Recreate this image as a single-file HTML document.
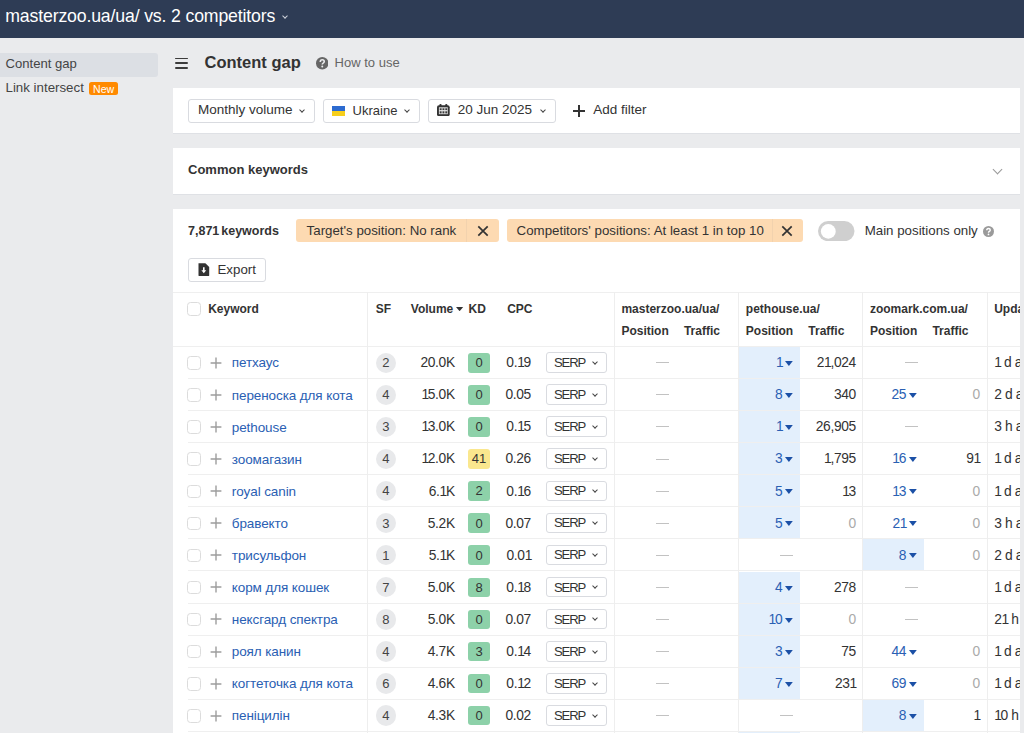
<!DOCTYPE html>
<html><head><meta charset="utf-8">
<style>
*{box-sizing:border-box;margin:0;padding:0}
html,body{width:1024px;height:733px;overflow:hidden;position:relative;background:#eaebed;font-family:"Liberation Sans",sans-serif;color:#333}
.t{position:absolute;white-space:nowrap}
.b{position:absolute}
.chev{position:absolute;width:4px;height:4px;border-right:1.4px solid #444;border-bottom:1.4px solid #444;transform:rotate(45deg)}
.tri{position:absolute;width:8px;height:5px}
</style></head><body>

<div class="b" style="left:0px;top:0px;width:1024px;height:38px;background:#2e3c55"></div>
<div class="t" style="left:5.30px;top:7.82px;font-size:17.7px;line-height:17.7px;color:#fff;font-weight:400;letter-spacing:-0.16px">masterzoo.ua/ua/ vs. 2 competitors</div>
<div class="chev" style="left:283px;top:13.5px;border-color:#cfd3dc;width:4px;height:4px"></div>
<div class="b" style="left:0px;top:53px;width:158px;height:24px;background:#dcdfe4;border-radius:0 3px 3px 0"></div>
<div class="t" style="left:5.50px;top:57.41px;font-size:13.1px;line-height:13.1px;color:#444;font-weight:400;">Content gap</div>
<div class="t" style="left:5.50px;top:80.74px;font-size:13.3px;line-height:13.3px;color:#444;font-weight:400;">Link intersect</div>
<div class="b" style="left:89px;top:82px;width:28.6px;height:13px;background:#ff8a00;border-radius:2.5px"></div>
<div class="t" style="left:53.60px;width:100px;text-align:center;top:83.63px;font-size:10.6px;line-height:10.6px;color:#fff;font-weight:400;">New</div>
<div class="b" style="left:174.5px;top:57.7px;width:13px;height:1.8px;background:#3c3c3c;border-radius:1px"></div>
<div class="b" style="left:174.5px;top:62.4px;width:13px;height:1.8px;background:#3c3c3c;border-radius:1px"></div>
<div class="b" style="left:174.5px;top:67.1px;width:13px;height:1.8px;background:#3c3c3c;border-radius:1px"></div>
<div class="t" style="left:204.50px;top:53.83px;font-size:16.5px;line-height:16.5px;color:#333;font-weight:700;">Content gap</div>
<svg class="b" style="left:315.7px;top:57px" width="12.5" height="12.5" viewBox="0 0 12 12"><circle cx="6" cy="6" r="6" fill="#666"/><path d="M4.1 4.7Q4.1 2.7 6 2.7Q7.9 2.7 7.9 4.4Q7.9 5.4 6.9 5.9Q6 6.4 6 7.3" stroke="#eaebed" stroke-width="1.55" fill="none"/><circle cx="6" cy="9.2" r="0.95" fill="#eaebed"/></svg>
<div class="t" style="left:334.60px;top:56.30px;font-size:13px;line-height:13px;color:#666;font-weight:400;">How to use</div>
<div class="b" style="left:173px;top:87.5px;width:847px;height:45.5px;background:#fff;box-shadow:0 1px 0 #dfe1e5"></div>
<div class="b" style="left:187.5px;top:99px;width:127px;height:24px;background:#fff;border:1px solid #d9dbe0;border-radius:3px"></div>
<div class="t" style="left:198.00px;top:103.47px;font-size:13.5px;line-height:13.5px;color:#333;font-weight:400;">Monthly volume</div>
<div class="chev" style="left:300px;top:107.5px"></div>
<div class="b" style="left:322.5px;top:99px;width:97.5px;height:24px;background:#fff;border:1px solid #d9dbe0;border-radius:3px"></div>
<div class="b" style="left:332px;top:105.5px;width:13px;height:5px;background:#2d6bd0"></div>
<div class="b" style="left:332px;top:110.5px;width:13px;height:5px;background:#f7cf1c"></div>
<div class="t" style="left:352.60px;top:103.90px;font-size:13px;line-height:13px;color:#333;font-weight:400;">Ukraine</div>
<div class="chev" style="left:405px;top:107.5px"></div>
<div class="b" style="left:427.5px;top:99px;width:128px;height:24px;background:#fff;border:1px solid #d9dbe0;border-radius:3px"></div>
<svg class="b" style="left:437.3px;top:103.8px" width="13" height="12.2" viewBox="0 0 13 12.2"><rect x="2.4" y="0" width="2.2" height="2.5" rx="1" fill="#333"/><rect x="8.2" y="0" width="2.2" height="2.5" rx="1" fill="#333"/><rect x="0" y="1.2" width="12.7" height="11" rx="2" fill="#333"/><rect x="1.9" y="3.3" width="8.9" height="6.9" fill="#e6e6e6"/><g fill="#3a3a3a"><rect x="2.7" y="4.3" width="1.9" height="1.8"/><rect x="5.5" y="4.3" width="1.9" height="1.8"/><rect x="8.3" y="4.3" width="1.9" height="1.8"/><rect x="2.7" y="7.3" width="1.9" height="2.1"/><rect x="5.5" y="7.3" width="1.9" height="2.1"/><rect x="8.3" y="7.3" width="1.9" height="2.1"/></g></svg>
<div class="t" style="left:457.80px;top:103.47px;font-size:13.5px;line-height:13.5px;color:#333;font-weight:400;">20 Jun 2025</div>
<div class="chev" style="left:540.5px;top:107.5px"></div>
<div class="b" style="left:573.2px;top:109.7px;width:11.6px;height:2px;background:#333"></div>
<div class="b" style="left:578px;top:104.8px;width:2px;height:11.8px;background:#333"></div>
<div class="t" style="left:593.30px;top:103.47px;font-size:13.5px;line-height:13.5px;color:#333;font-weight:400;">Add filter</div>
<div class="b" style="left:173px;top:147.6px;width:847px;height:46.4px;background:#fff;box-shadow:0 1px 0 #dfe1e5"></div>
<div class="t" style="left:188.00px;top:163.10px;font-size:13px;line-height:13px;color:#333;font-weight:700;">Common keywords</div>
<div class="chev" style="left:993.5px;top:166px;width:7px;height:7px;border-color:#999;border-width:0 1.7px 1.7px 0"></div>
<div class="b" style="left:173px;top:208.7px;width:847px;height:530px;background:#fff"></div>
<div class="t" style="left:188.00px;top:224.72px;font-size:12.5px;line-height:12.5px;color:#333;font-weight:700;word-spacing:-1.5px">7,871 keywords</div>
<div class="b" style="left:295.8px;top:219.2px;width:203.2px;height:23.3px;background:#fddab2;border-radius:3px"></div><div class="b" style="left:466.4px;top:219.2px;width:1px;height:23.3px;background:#f2d2ae"></div><div class="t" style="left:306.60px;top:224.04px;font-size:13.3px;line-height:13.3px;color:#333;font-weight:400;">Target's position: No rank</div><svg class="b" style="left:476.7px;top:225.3px" width="12" height="12" viewBox="0 0 12 12"><path d="M1.3 1.3L10.7 10.7M10.7 1.3L1.3 10.7" stroke="#333" stroke-width="1.7"/></svg>
<div class="b" style="left:506.6px;top:219.2px;width:296.19999999999993px;height:23.3px;background:#fddab2;border-radius:3px"></div><div class="b" style="left:771.6px;top:219.2px;width:1px;height:23.3px;background:#f2d2ae"></div><div class="t" style="left:516.60px;top:224.04px;font-size:13.3px;line-height:13.3px;color:#333;font-weight:400;">Competitors' positions: At least 1 in top 10</div><svg class="b" style="left:781.2px;top:225.3px" width="12" height="12" viewBox="0 0 12 12"><path d="M1.3 1.3L10.7 10.7M10.7 1.3L1.3 10.7" stroke="#333" stroke-width="1.7"/></svg>
<svg class="b" style="left:818px;top:220.7px" width="36.5" height="20.2" viewBox="0 0 36.5 20.2"><rect x="0" y="0" width="36.5" height="20.2" rx="10.1" fill="#cfcfcf"/><circle cx="10.3" cy="10.4" r="7.4" fill="#fff"/></svg>
<div class="t" style="left:864.70px;top:224.24px;font-size:13.3px;line-height:13.3px;color:#333;font-weight:400;">Main positions only</div>
<svg class="b" style="left:983.2px;top:225.8px" width="11" height="11" viewBox="0 0 12 12"><circle cx="6" cy="6" r="6" fill="#9a9a9a"/><path d="M4.1 4.7Q4.1 2.7 6 2.7Q7.9 2.7 7.9 4.4Q7.9 5.4 6.9 5.9Q6 6.4 6 7.3" stroke="#fff" stroke-width="1.55" fill="none"/><circle cx="6" cy="9.2" r="0.95" fill="#fff"/></svg>
<div class="b" style="left:187.5px;top:257.5px;width:78.5px;height:24px;background:#fff;border:1px solid #d9dbe0;border-radius:3px"></div>
<svg class="b" style="left:198px;top:263px" width="11.5" height="13" viewBox="0 0 11.5 13"><path d="M0.5 0.3H7.4L11.2 4V12.5Q11.2 12.9 10.8 12.9H0.9Q0.5 12.9 0.5 12.5Z" fill="#333"/><path d="M5.8 4.2V9" stroke="#fff" stroke-width="1.6"/><path d="M3.4 7.3L5.8 10.2L8.2 7.3Z" fill="#fff"/></svg>
<div class="t" style="left:217.50px;top:263.24px;font-size:13.3px;line-height:13.3px;color:#333;font-weight:400;">Export</div>
<div class="b" style="left:173px;top:292px;width:847px;height:1px;background:#efefef"></div>
<div class="b" style="left:173px;top:346px;width:847px;height:1px;background:#efefef"></div>
<div class="b" style="left:187px;top:302px;width:14px;height:13.5px;border:1px solid #dcdcdc;border-radius:3.5px;background:#fff"></div>
<div class="t" style="left:208.20px;top:302.94px;font-size:12px;line-height:12px;color:#333;font-weight:700;">Keyword</div>
<div class="t" style="left:375.70px;top:302.94px;font-size:12px;line-height:12px;color:#333;font-weight:700;">SF</div>
<div class="t" style="left:410.80px;top:302.94px;font-size:12px;line-height:12px;color:#333;font-weight:700;">Volume</div>
<svg class="b" style="left:456px;top:306.8px" width="7.5" height="4.5" viewBox="0 0 7.5 4.5"><path d="M0 0H7.2L3.6 4.2Z" fill="#333"/></svg>
<div class="t" style="left:468.60px;top:302.94px;font-size:12px;line-height:12px;color:#333;font-weight:700;">KD</div>
<div class="t" style="left:507.20px;top:302.94px;font-size:12px;line-height:12px;color:#333;font-weight:700;">CPC</div>
<div class="t" style="left:621.40px;top:302.94px;font-size:12px;line-height:12px;color:#333;font-weight:700;">masterzoo.ua/ua/</div>
<div class="t" style="left:745.80px;top:302.94px;font-size:12px;line-height:12px;color:#333;font-weight:700;">pethouse.ua/</div>
<div class="t" style="left:869.90px;top:302.94px;font-size:12px;line-height:12px;color:#333;font-weight:700;">zoomark.com.ua/</div>
<div class="t" style="left:994.20px;top:302.94px;font-size:12px;line-height:12px;color:#333;font-weight:700;">Updated</div>
<div class="t" style="left:621.40px;top:324.74px;font-size:12px;line-height:12px;color:#333;font-weight:700;">Position</div>
<div class="t" style="left:683.90px;top:324.74px;font-size:12px;line-height:12px;color:#333;font-weight:700;">Traffic</div>
<div class="t" style="left:745.80px;top:324.74px;font-size:12px;line-height:12px;color:#333;font-weight:700;">Position</div>
<div class="t" style="left:808.30px;top:324.74px;font-size:12px;line-height:12px;color:#333;font-weight:700;">Traffic</div>
<div class="t" style="left:869.90px;top:324.74px;font-size:12px;line-height:12px;color:#333;font-weight:700;">Position</div>
<div class="t" style="left:932.40px;top:324.74px;font-size:12px;line-height:12px;color:#333;font-weight:700;">Traffic</div>
<div class="b" style="left:738px;top:347.0px;width:62px;height:32px;background:#e3effc"></div>
<div class="b" style="left:187.5px;top:378.0px;width:832.5px;height:1px;background:#efefef"></div>
<div class="b" style="left:187px;top:356.2px;width:14px;height:13.5px;border:1px solid #dcdcdc;border-radius:3.5px;background:#fff"></div>
<svg class="b" style="left:210px;top:356.8px" width="12" height="12" viewBox="0 0 12 12"><path d="M0.6 6H11.4M6 0.6V11.4" stroke="#9d9d9d" stroke-width="1.4"/></svg>
<div class="t" style="left:231.80px;top:356.47px;font-size:13.5px;line-height:13.5px;color:#2a60b3;font-weight:400;letter-spacing:-0.1px">петхаус</div>
<div class="b" style="left:375.7px;top:352.6px;width:20.3px;height:20.3px;background:#e8e9eb;border-radius:50%"></div>
<div class="t" style="left:335.85px;width:100px;text-align:center;top:356.10px;font-size:13px;line-height:13px;color:#444;font-weight:400;">2</div>
<div class="t" style="right:569.25px;top:356.22px;font-size:13.8px;line-height:13.8px;color:#333;font-weight:400;letter-spacing:-0.35px">20.0K</div>
<div class="b" style="left:468px;top:353.0px;width:22px;height:19.5px;background:#8dd1a9;border-radius:3px"></div>
<div class="t" style="left:429.00px;width:100px;text-align:center;top:356.10px;font-size:13px;line-height:13px;color:#333;font-weight:400;">0</div>
<div class="t" style="right:493.15px;top:356.22px;font-size:13.8px;line-height:13.8px;color:#333;font-weight:400;letter-spacing:-0.35px">0.<span style="letter-spacing:-1.3px">1</span>9</div>
<div class="b" style="left:546.2px;top:352.2px;width:60.6px;height:20.6px;background:#fff;border:1px solid #d9dbe0;border-radius:3px"></div>
<div class="t" style="left:553.90px;top:356.01px;font-size:13.1px;line-height:13.1px;color:#333;font-weight:400;letter-spacing:-1.1px">SERP</div>
<div class="chev" style="left:592.5px;top:359.8px"></div>
<div class="b" style="left:656.2px;top:362px;width:13px;height:1px;background:#c2c2c2"></div>
<div class="t" style="right:240.65px;top:356.22px;font-size:13.8px;line-height:13.8px;color:#2a60b3;font-weight:400;letter-spacing:-0.35px">1</div>
<svg class="tri" style="left:785px;top:361.0px" width="8" height="5" viewBox="0 0 8 5"><path d="M0 0H7.8L3.9 5Z" fill="#1b50a6"/></svg>
<div class="t" style="right:168.15px;top:356.22px;font-size:13.8px;line-height:13.8px;color:#333;font-weight:400;letter-spacing:-0.35px">2<span style="letter-spacing:-1.3px">1</span>,024</div>
<div class="b" style="left:904.5px;top:362px;width:13px;height:1px;background:#c2c2c2"></div>
<div class="t" style="left:994.20px;top:356.22px;font-size:13.8px;line-height:13.8px;color:#333;font-weight:400;letter-spacing:-0.35px"><span style="letter-spacing:-1.3px">1</span> d a</div>
<div class="b" style="left:738px;top:379.08px;width:62px;height:32px;background:#e3effc"></div>
<div class="b" style="left:187.5px;top:410.08px;width:832.5px;height:1px;background:#efefef"></div>
<div class="b" style="left:187px;top:388.28px;width:14px;height:13.5px;border:1px solid #dcdcdc;border-radius:3.5px;background:#fff"></div>
<svg class="b" style="left:210px;top:388.88px" width="12" height="12" viewBox="0 0 12 12"><path d="M0.6 6H11.4M6 0.6V11.4" stroke="#9d9d9d" stroke-width="1.4"/></svg>
<div class="t" style="left:231.80px;top:388.55px;font-size:13.5px;line-height:13.5px;color:#2a60b3;font-weight:400;letter-spacing:-0.1px">переноска для кота</div>
<div class="b" style="left:375.7px;top:384.68px;width:20.3px;height:20.3px;background:#e8e9eb;border-radius:50%"></div>
<div class="t" style="left:335.85px;width:100px;text-align:center;top:388.18px;font-size:13px;line-height:13px;color:#444;font-weight:400;">4</div>
<div class="t" style="right:569.25px;top:388.30px;font-size:13.8px;line-height:13.8px;color:#333;font-weight:400;letter-spacing:-0.35px"><span style="letter-spacing:-1.3px">1</span>5.0K</div>
<div class="b" style="left:468px;top:385.08px;width:22px;height:19.5px;background:#8dd1a9;border-radius:3px"></div>
<div class="t" style="left:429.00px;width:100px;text-align:center;top:388.18px;font-size:13px;line-height:13px;color:#333;font-weight:400;">0</div>
<div class="t" style="right:493.15px;top:388.30px;font-size:13.8px;line-height:13.8px;color:#333;font-weight:400;letter-spacing:-0.35px">0.05</div>
<div class="b" style="left:546.2px;top:384.28px;width:60.6px;height:20.6px;background:#fff;border:1px solid #d9dbe0;border-radius:3px"></div>
<div class="t" style="left:553.90px;top:388.09px;font-size:13.1px;line-height:13.1px;color:#333;font-weight:400;letter-spacing:-1.1px">SERP</div>
<div class="chev" style="left:592.5px;top:391.88px"></div>
<div class="b" style="left:656.2px;top:394px;width:13px;height:1px;background:#c2c2c2"></div>
<div class="t" style="right:241.75px;top:388.30px;font-size:13.8px;line-height:13.8px;color:#2a60b3;font-weight:400;letter-spacing:-0.35px">8</div>
<svg class="tri" style="left:785px;top:393.08px" width="8" height="5" viewBox="0 0 8 5"><path d="M0 0H7.8L3.9 5Z" fill="#1b50a6"/></svg>
<div class="t" style="right:168.15px;top:388.30px;font-size:13.8px;line-height:13.8px;color:#333;font-weight:400;letter-spacing:-0.35px">340</div>
<div class="t" style="right:117.95px;top:388.30px;font-size:13.8px;line-height:13.8px;color:#2a60b3;font-weight:400;letter-spacing:-0.35px">25</div>
<svg class="tri" style="left:909.2px;top:393.08px" width="8" height="5" viewBox="0 0 8 5"><path d="M0 0H7.8L3.9 5Z" fill="#1b50a6"/></svg>
<div class="t" style="right:44.25px;top:388.30px;font-size:13.8px;line-height:13.8px;color:#aaa;font-weight:400;letter-spacing:-0.35px">0</div>
<div class="t" style="left:994.20px;top:388.30px;font-size:13.8px;line-height:13.8px;color:#333;font-weight:400;letter-spacing:-0.35px">2 d a</div>
<div class="b" style="left:738px;top:411.15999999999997px;width:62px;height:32px;background:#e3effc"></div>
<div class="b" style="left:187.5px;top:442.15999999999997px;width:832.5px;height:1px;background:#efefef"></div>
<div class="b" style="left:187px;top:420.35999999999996px;width:14px;height:13.5px;border:1px solid #dcdcdc;border-radius:3.5px;background:#fff"></div>
<svg class="b" style="left:210px;top:420.96px" width="12" height="12" viewBox="0 0 12 12"><path d="M0.6 6H11.4M6 0.6V11.4" stroke="#9d9d9d" stroke-width="1.4"/></svg>
<div class="t" style="left:231.80px;top:420.63px;font-size:13.5px;line-height:13.5px;color:#2a60b3;font-weight:400;letter-spacing:-0.1px">pethouse</div>
<div class="b" style="left:375.7px;top:416.76px;width:20.3px;height:20.3px;background:#e8e9eb;border-radius:50%"></div>
<div class="t" style="left:335.85px;width:100px;text-align:center;top:420.26px;font-size:13px;line-height:13px;color:#444;font-weight:400;">3</div>
<div class="t" style="right:569.25px;top:420.38px;font-size:13.8px;line-height:13.8px;color:#333;font-weight:400;letter-spacing:-0.35px"><span style="letter-spacing:-1.3px">1</span>3.0K</div>
<div class="b" style="left:468px;top:417.15999999999997px;width:22px;height:19.5px;background:#8dd1a9;border-radius:3px"></div>
<div class="t" style="left:429.00px;width:100px;text-align:center;top:420.26px;font-size:13px;line-height:13px;color:#333;font-weight:400;">0</div>
<div class="t" style="right:493.15px;top:420.38px;font-size:13.8px;line-height:13.8px;color:#333;font-weight:400;letter-spacing:-0.35px">0.<span style="letter-spacing:-1.3px">1</span>5</div>
<div class="b" style="left:546.2px;top:416.35999999999996px;width:60.6px;height:20.6px;background:#fff;border:1px solid #d9dbe0;border-radius:3px"></div>
<div class="t" style="left:553.90px;top:420.17px;font-size:13.1px;line-height:13.1px;color:#333;font-weight:400;letter-spacing:-1.1px">SERP</div>
<div class="chev" style="left:592.5px;top:423.96px"></div>
<div class="b" style="left:656.2px;top:426px;width:13px;height:1px;background:#c2c2c2"></div>
<div class="t" style="right:240.65px;top:420.38px;font-size:13.8px;line-height:13.8px;color:#2a60b3;font-weight:400;letter-spacing:-0.35px">1</div>
<svg class="tri" style="left:785px;top:425.15999999999997px" width="8" height="5" viewBox="0 0 8 5"><path d="M0 0H7.8L3.9 5Z" fill="#1b50a6"/></svg>
<div class="t" style="right:168.15px;top:420.38px;font-size:13.8px;line-height:13.8px;color:#333;font-weight:400;letter-spacing:-0.35px">26,905</div>
<div class="b" style="left:904.5px;top:426px;width:13px;height:1px;background:#c2c2c2"></div>
<div class="t" style="left:994.20px;top:420.38px;font-size:13.8px;line-height:13.8px;color:#333;font-weight:400;letter-spacing:-0.35px">3 h a</div>
<div class="b" style="left:738px;top:443.24px;width:62px;height:32px;background:#e3effc"></div>
<div class="b" style="left:187.5px;top:474.24px;width:832.5px;height:1px;background:#efefef"></div>
<div class="b" style="left:187px;top:452.44px;width:14px;height:13.5px;border:1px solid #dcdcdc;border-radius:3.5px;background:#fff"></div>
<svg class="b" style="left:210px;top:453.04px" width="12" height="12" viewBox="0 0 12 12"><path d="M0.6 6H11.4M6 0.6V11.4" stroke="#9d9d9d" stroke-width="1.4"/></svg>
<div class="t" style="left:231.80px;top:452.71px;font-size:13.5px;line-height:13.5px;color:#2a60b3;font-weight:400;letter-spacing:-0.1px">зоомагазин</div>
<div class="b" style="left:375.7px;top:448.84000000000003px;width:20.3px;height:20.3px;background:#e8e9eb;border-radius:50%"></div>
<div class="t" style="left:335.85px;width:100px;text-align:center;top:452.34px;font-size:13px;line-height:13px;color:#444;font-weight:400;">4</div>
<div class="t" style="right:569.25px;top:452.46px;font-size:13.8px;line-height:13.8px;color:#333;font-weight:400;letter-spacing:-0.35px"><span style="letter-spacing:-1.3px">1</span>2.0K</div>
<div class="b" style="left:468px;top:449.24px;width:22px;height:19.5px;background:#fae78e;border-radius:3px"></div>
<div class="t" style="left:429.00px;width:100px;text-align:center;top:452.34px;font-size:13px;line-height:13px;color:#333;font-weight:400;">41</div>
<div class="t" style="right:493.15px;top:452.46px;font-size:13.8px;line-height:13.8px;color:#333;font-weight:400;letter-spacing:-0.35px">0.26</div>
<div class="b" style="left:546.2px;top:448.44px;width:60.6px;height:20.6px;background:#fff;border:1px solid #d9dbe0;border-radius:3px"></div>
<div class="t" style="left:553.90px;top:452.25px;font-size:13.1px;line-height:13.1px;color:#333;font-weight:400;letter-spacing:-1.1px">SERP</div>
<div class="chev" style="left:592.5px;top:456.04px"></div>
<div class="b" style="left:656.2px;top:459px;width:13px;height:1px;background:#c2c2c2"></div>
<div class="t" style="right:241.75px;top:452.46px;font-size:13.8px;line-height:13.8px;color:#2a60b3;font-weight:400;letter-spacing:-0.35px">3</div>
<svg class="tri" style="left:785px;top:457.24px" width="8" height="5" viewBox="0 0 8 5"><path d="M0 0H7.8L3.9 5Z" fill="#1b50a6"/></svg>
<div class="t" style="right:168.15px;top:452.46px;font-size:13.8px;line-height:13.8px;color:#333;font-weight:400;letter-spacing:-0.35px"><span style="letter-spacing:-1.3px">1</span>,795</div>
<div class="t" style="right:117.95px;top:452.46px;font-size:13.8px;line-height:13.8px;color:#2a60b3;font-weight:400;letter-spacing:-0.35px"><span style="letter-spacing:-1.3px">1</span>6</div>
<svg class="tri" style="left:909.2px;top:457.24px" width="8" height="5" viewBox="0 0 8 5"><path d="M0 0H7.8L3.9 5Z" fill="#1b50a6"/></svg>
<div class="t" style="right:43.15px;top:452.46px;font-size:13.8px;line-height:13.8px;color:#333;font-weight:400;letter-spacing:-0.35px">91</div>
<div class="t" style="left:994.20px;top:452.46px;font-size:13.8px;line-height:13.8px;color:#333;font-weight:400;letter-spacing:-0.35px"><span style="letter-spacing:-1.3px">1</span> d a</div>
<div class="b" style="left:738px;top:475.32px;width:62px;height:32px;background:#e3effc"></div>
<div class="b" style="left:187.5px;top:506.32px;width:832.5px;height:1px;background:#efefef"></div>
<div class="b" style="left:187px;top:484.52px;width:14px;height:13.5px;border:1px solid #dcdcdc;border-radius:3.5px;background:#fff"></div>
<svg class="b" style="left:210px;top:485.12px" width="12" height="12" viewBox="0 0 12 12"><path d="M0.6 6H11.4M6 0.6V11.4" stroke="#9d9d9d" stroke-width="1.4"/></svg>
<div class="t" style="left:231.80px;top:484.79px;font-size:13.5px;line-height:13.5px;color:#2a60b3;font-weight:400;letter-spacing:-0.1px">royal canin</div>
<div class="b" style="left:375.7px;top:480.92px;width:20.3px;height:20.3px;background:#e8e9eb;border-radius:50%"></div>
<div class="t" style="left:335.85px;width:100px;text-align:center;top:484.42px;font-size:13px;line-height:13px;color:#444;font-weight:400;">4</div>
<div class="t" style="right:569.25px;top:484.54px;font-size:13.8px;line-height:13.8px;color:#333;font-weight:400;letter-spacing:-0.35px">6.<span style="letter-spacing:-1.3px">1</span>K</div>
<div class="b" style="left:468px;top:481.32px;width:22px;height:19.5px;background:#8dd1a9;border-radius:3px"></div>
<div class="t" style="left:429.00px;width:100px;text-align:center;top:484.42px;font-size:13px;line-height:13px;color:#333;font-weight:400;">2</div>
<div class="t" style="right:493.15px;top:484.54px;font-size:13.8px;line-height:13.8px;color:#333;font-weight:400;letter-spacing:-0.35px">0.<span style="letter-spacing:-1.3px">1</span>6</div>
<div class="b" style="left:546.2px;top:480.52px;width:60.6px;height:20.6px;background:#fff;border:1px solid #d9dbe0;border-radius:3px"></div>
<div class="t" style="left:553.90px;top:484.33px;font-size:13.1px;line-height:13.1px;color:#333;font-weight:400;letter-spacing:-1.1px">SERP</div>
<div class="chev" style="left:592.5px;top:488.12px"></div>
<div class="b" style="left:656.2px;top:491px;width:13px;height:1px;background:#c2c2c2"></div>
<div class="t" style="right:241.75px;top:484.54px;font-size:13.8px;line-height:13.8px;color:#2a60b3;font-weight:400;letter-spacing:-0.35px">5</div>
<svg class="tri" style="left:785px;top:489.32px" width="8" height="5" viewBox="0 0 8 5"><path d="M0 0H7.8L3.9 5Z" fill="#1b50a6"/></svg>
<div class="t" style="right:168.15px;top:484.54px;font-size:13.8px;line-height:13.8px;color:#333;font-weight:400;letter-spacing:-0.35px"><span style="letter-spacing:-1.3px">1</span>3</div>
<div class="t" style="right:117.95px;top:484.54px;font-size:13.8px;line-height:13.8px;color:#2a60b3;font-weight:400;letter-spacing:-0.35px"><span style="letter-spacing:-1.3px">1</span>3</div>
<svg class="tri" style="left:909.2px;top:489.32px" width="8" height="5" viewBox="0 0 8 5"><path d="M0 0H7.8L3.9 5Z" fill="#1b50a6"/></svg>
<div class="t" style="right:44.25px;top:484.54px;font-size:13.8px;line-height:13.8px;color:#aaa;font-weight:400;letter-spacing:-0.35px">0</div>
<div class="t" style="left:994.20px;top:484.54px;font-size:13.8px;line-height:13.8px;color:#333;font-weight:400;letter-spacing:-0.35px"><span style="letter-spacing:-1.3px">1</span> d a</div>
<div class="b" style="left:738px;top:507.4px;width:62px;height:32px;background:#e3effc"></div>
<div class="b" style="left:187.5px;top:538.4px;width:832.5px;height:1px;background:#efefef"></div>
<div class="b" style="left:187px;top:516.6px;width:14px;height:13.5px;border:1px solid #dcdcdc;border-radius:3.5px;background:#fff"></div>
<svg class="b" style="left:210px;top:517.1999999999999px" width="12" height="12" viewBox="0 0 12 12"><path d="M0.6 6H11.4M6 0.6V11.4" stroke="#9d9d9d" stroke-width="1.4"/></svg>
<div class="t" style="left:231.80px;top:516.87px;font-size:13.5px;line-height:13.5px;color:#2a60b3;font-weight:400;letter-spacing:-0.1px">бравекто</div>
<div class="b" style="left:375.7px;top:513.0px;width:20.3px;height:20.3px;background:#e8e9eb;border-radius:50%"></div>
<div class="t" style="left:335.85px;width:100px;text-align:center;top:516.50px;font-size:13px;line-height:13px;color:#444;font-weight:400;">3</div>
<div class="t" style="right:569.25px;top:516.62px;font-size:13.8px;line-height:13.8px;color:#333;font-weight:400;letter-spacing:-0.35px">5.2K</div>
<div class="b" style="left:468px;top:513.4px;width:22px;height:19.5px;background:#8dd1a9;border-radius:3px"></div>
<div class="t" style="left:429.00px;width:100px;text-align:center;top:516.50px;font-size:13px;line-height:13px;color:#333;font-weight:400;">0</div>
<div class="t" style="right:493.15px;top:516.62px;font-size:13.8px;line-height:13.8px;color:#333;font-weight:400;letter-spacing:-0.35px">0.07</div>
<div class="b" style="left:546.2px;top:512.6px;width:60.6px;height:20.6px;background:#fff;border:1px solid #d9dbe0;border-radius:3px"></div>
<div class="t" style="left:553.90px;top:516.41px;font-size:13.1px;line-height:13.1px;color:#333;font-weight:400;letter-spacing:-1.1px">SERP</div>
<div class="chev" style="left:592.5px;top:520.1999999999999px"></div>
<div class="b" style="left:656.2px;top:523px;width:13px;height:1px;background:#c2c2c2"></div>
<div class="t" style="right:241.75px;top:516.62px;font-size:13.8px;line-height:13.8px;color:#2a60b3;font-weight:400;letter-spacing:-0.35px">5</div>
<svg class="tri" style="left:785px;top:521.4px" width="8" height="5" viewBox="0 0 8 5"><path d="M0 0H7.8L3.9 5Z" fill="#1b50a6"/></svg>
<div class="t" style="right:168.15px;top:516.62px;font-size:13.8px;line-height:13.8px;color:#aaa;font-weight:400;letter-spacing:-0.35px">0</div>
<div class="t" style="right:116.85px;top:516.62px;font-size:13.8px;line-height:13.8px;color:#2a60b3;font-weight:400;letter-spacing:-0.35px">21</div>
<svg class="tri" style="left:909.2px;top:521.4px" width="8" height="5" viewBox="0 0 8 5"><path d="M0 0H7.8L3.9 5Z" fill="#1b50a6"/></svg>
<div class="t" style="right:44.25px;top:516.62px;font-size:13.8px;line-height:13.8px;color:#aaa;font-weight:400;letter-spacing:-0.35px">0</div>
<div class="t" style="left:994.20px;top:516.62px;font-size:13.8px;line-height:13.8px;color:#333;font-weight:400;letter-spacing:-0.35px">3 h a</div>
<div class="b" style="left:862px;top:539.48px;width:62px;height:32px;background:#e3effc"></div>
<div class="b" style="left:187.5px;top:570.48px;width:832.5px;height:1px;background:#efefef"></div>
<div class="b" style="left:187px;top:548.6800000000001px;width:14px;height:13.5px;border:1px solid #dcdcdc;border-radius:3.5px;background:#fff"></div>
<svg class="b" style="left:210px;top:549.28px" width="12" height="12" viewBox="0 0 12 12"><path d="M0.6 6H11.4M6 0.6V11.4" stroke="#9d9d9d" stroke-width="1.4"/></svg>
<div class="t" style="left:231.80px;top:548.95px;font-size:13.5px;line-height:13.5px;color:#2a60b3;font-weight:400;letter-spacing:-0.1px">трисульфон</div>
<div class="b" style="left:375.7px;top:545.08px;width:20.3px;height:20.3px;background:#e8e9eb;border-radius:50%"></div>
<div class="t" style="left:335.85px;width:100px;text-align:center;top:548.58px;font-size:13px;line-height:13px;color:#444;font-weight:400;">1</div>
<div class="t" style="right:569.25px;top:548.70px;font-size:13.8px;line-height:13.8px;color:#333;font-weight:400;letter-spacing:-0.35px">5.<span style="letter-spacing:-1.3px">1</span>K</div>
<div class="b" style="left:468px;top:545.48px;width:22px;height:19.5px;background:#8dd1a9;border-radius:3px"></div>
<div class="t" style="left:429.00px;width:100px;text-align:center;top:548.58px;font-size:13px;line-height:13px;color:#333;font-weight:400;">0</div>
<div class="t" style="right:492.05px;top:548.70px;font-size:13.8px;line-height:13.8px;color:#333;font-weight:400;letter-spacing:-0.35px">0.01</div>
<div class="b" style="left:546.2px;top:544.6800000000001px;width:60.6px;height:20.6px;background:#fff;border:1px solid #d9dbe0;border-radius:3px"></div>
<div class="t" style="left:553.90px;top:548.49px;font-size:13.1px;line-height:13.1px;color:#333;font-weight:400;letter-spacing:-1.1px">SERP</div>
<div class="chev" style="left:592.5px;top:552.28px"></div>
<div class="b" style="left:656.2px;top:555px;width:13px;height:1px;background:#c2c2c2"></div>
<div class="b" style="left:780px;top:555px;width:13px;height:1px;background:#c2c2c2"></div>
<div class="t" style="right:117.95px;top:548.70px;font-size:13.8px;line-height:13.8px;color:#2a60b3;font-weight:400;letter-spacing:-0.35px">8</div>
<svg class="tri" style="left:909.2px;top:553.48px" width="8" height="5" viewBox="0 0 8 5"><path d="M0 0H7.8L3.9 5Z" fill="#1b50a6"/></svg>
<div class="t" style="right:44.25px;top:548.70px;font-size:13.8px;line-height:13.8px;color:#aaa;font-weight:400;letter-spacing:-0.35px">0</div>
<div class="t" style="left:994.20px;top:548.70px;font-size:13.8px;line-height:13.8px;color:#333;font-weight:400;letter-spacing:-0.35px">2 d a</div>
<div class="b" style="left:738px;top:571.56px;width:62px;height:32px;background:#e3effc"></div>
<div class="b" style="left:187.5px;top:602.56px;width:832.5px;height:1px;background:#efefef"></div>
<div class="b" style="left:187px;top:580.76px;width:14px;height:13.5px;border:1px solid #dcdcdc;border-radius:3.5px;background:#fff"></div>
<svg class="b" style="left:210px;top:581.3599999999999px" width="12" height="12" viewBox="0 0 12 12"><path d="M0.6 6H11.4M6 0.6V11.4" stroke="#9d9d9d" stroke-width="1.4"/></svg>
<div class="t" style="left:231.80px;top:581.03px;font-size:13.5px;line-height:13.5px;color:#2a60b3;font-weight:400;letter-spacing:-0.1px">корм для кошек</div>
<div class="b" style="left:375.7px;top:577.16px;width:20.3px;height:20.3px;background:#e8e9eb;border-radius:50%"></div>
<div class="t" style="left:335.85px;width:100px;text-align:center;top:580.66px;font-size:13px;line-height:13px;color:#444;font-weight:400;">7</div>
<div class="t" style="right:569.25px;top:580.78px;font-size:13.8px;line-height:13.8px;color:#333;font-weight:400;letter-spacing:-0.35px">5.0K</div>
<div class="b" style="left:468px;top:577.56px;width:22px;height:19.5px;background:#8dd1a9;border-radius:3px"></div>
<div class="t" style="left:429.00px;width:100px;text-align:center;top:580.66px;font-size:13px;line-height:13px;color:#333;font-weight:400;">8</div>
<div class="t" style="right:493.15px;top:580.78px;font-size:13.8px;line-height:13.8px;color:#333;font-weight:400;letter-spacing:-0.35px">0.<span style="letter-spacing:-1.3px">1</span>8</div>
<div class="b" style="left:546.2px;top:576.76px;width:60.6px;height:20.6px;background:#fff;border:1px solid #d9dbe0;border-radius:3px"></div>
<div class="t" style="left:553.90px;top:580.57px;font-size:13.1px;line-height:13.1px;color:#333;font-weight:400;letter-spacing:-1.1px">SERP</div>
<div class="chev" style="left:592.5px;top:584.3599999999999px"></div>
<div class="b" style="left:656.2px;top:587px;width:13px;height:1px;background:#c2c2c2"></div>
<div class="t" style="right:241.75px;top:580.78px;font-size:13.8px;line-height:13.8px;color:#2a60b3;font-weight:400;letter-spacing:-0.35px">4</div>
<svg class="tri" style="left:785px;top:585.56px" width="8" height="5" viewBox="0 0 8 5"><path d="M0 0H7.8L3.9 5Z" fill="#1b50a6"/></svg>
<div class="t" style="right:168.15px;top:580.78px;font-size:13.8px;line-height:13.8px;color:#333;font-weight:400;letter-spacing:-0.35px">278</div>
<div class="b" style="left:904.5px;top:587px;width:13px;height:1px;background:#c2c2c2"></div>
<div class="t" style="left:994.20px;top:580.78px;font-size:13.8px;line-height:13.8px;color:#333;font-weight:400;letter-spacing:-0.35px"><span style="letter-spacing:-1.3px">1</span> d a</div>
<div class="b" style="left:738px;top:603.64px;width:62px;height:32px;background:#e3effc"></div>
<div class="b" style="left:187.5px;top:634.64px;width:832.5px;height:1px;background:#efefef"></div>
<div class="b" style="left:187px;top:612.84px;width:14px;height:13.5px;border:1px solid #dcdcdc;border-radius:3.5px;background:#fff"></div>
<svg class="b" style="left:210px;top:613.4399999999999px" width="12" height="12" viewBox="0 0 12 12"><path d="M0.6 6H11.4M6 0.6V11.4" stroke="#9d9d9d" stroke-width="1.4"/></svg>
<div class="t" style="left:231.80px;top:613.11px;font-size:13.5px;line-height:13.5px;color:#2a60b3;font-weight:400;letter-spacing:-0.1px">нексгард спектра</div>
<div class="b" style="left:375.7px;top:609.24px;width:20.3px;height:20.3px;background:#e8e9eb;border-radius:50%"></div>
<div class="t" style="left:335.85px;width:100px;text-align:center;top:612.74px;font-size:13px;line-height:13px;color:#444;font-weight:400;">8</div>
<div class="t" style="right:569.25px;top:612.86px;font-size:13.8px;line-height:13.8px;color:#333;font-weight:400;letter-spacing:-0.35px">5.0K</div>
<div class="b" style="left:468px;top:609.64px;width:22px;height:19.5px;background:#8dd1a9;border-radius:3px"></div>
<div class="t" style="left:429.00px;width:100px;text-align:center;top:612.74px;font-size:13px;line-height:13px;color:#333;font-weight:400;">0</div>
<div class="t" style="right:493.15px;top:612.86px;font-size:13.8px;line-height:13.8px;color:#333;font-weight:400;letter-spacing:-0.35px">0.07</div>
<div class="b" style="left:546.2px;top:608.84px;width:60.6px;height:20.6px;background:#fff;border:1px solid #d9dbe0;border-radius:3px"></div>
<div class="t" style="left:553.90px;top:612.65px;font-size:13.1px;line-height:13.1px;color:#333;font-weight:400;letter-spacing:-1.1px">SERP</div>
<div class="chev" style="left:592.5px;top:616.4399999999999px"></div>
<div class="b" style="left:656.2px;top:619px;width:13px;height:1px;background:#c2c2c2"></div>
<div class="t" style="right:241.75px;top:612.86px;font-size:13.8px;line-height:13.8px;color:#2a60b3;font-weight:400;letter-spacing:-0.35px"><span style="letter-spacing:-1.3px">1</span>0</div>
<svg class="tri" style="left:785px;top:617.64px" width="8" height="5" viewBox="0 0 8 5"><path d="M0 0H7.8L3.9 5Z" fill="#1b50a6"/></svg>
<div class="t" style="right:168.15px;top:612.86px;font-size:13.8px;line-height:13.8px;color:#aaa;font-weight:400;letter-spacing:-0.35px">0</div>
<div class="b" style="left:904.5px;top:619px;width:13px;height:1px;background:#c2c2c2"></div>
<div class="t" style="left:994.20px;top:612.86px;font-size:13.8px;line-height:13.8px;color:#333;font-weight:400;letter-spacing:-0.35px">2<span style="letter-spacing:-1.3px">1</span> h</div>
<div class="b" style="left:738px;top:635.72px;width:62px;height:32px;background:#e3effc"></div>
<div class="b" style="left:187.5px;top:666.72px;width:832.5px;height:1px;background:#efefef"></div>
<div class="b" style="left:187px;top:644.9200000000001px;width:14px;height:13.5px;border:1px solid #dcdcdc;border-radius:3.5px;background:#fff"></div>
<svg class="b" style="left:210px;top:645.52px" width="12" height="12" viewBox="0 0 12 12"><path d="M0.6 6H11.4M6 0.6V11.4" stroke="#9d9d9d" stroke-width="1.4"/></svg>
<div class="t" style="left:231.80px;top:645.19px;font-size:13.5px;line-height:13.5px;color:#2a60b3;font-weight:400;letter-spacing:-0.1px">роял канин</div>
<div class="b" style="left:375.7px;top:641.32px;width:20.3px;height:20.3px;background:#e8e9eb;border-radius:50%"></div>
<div class="t" style="left:335.85px;width:100px;text-align:center;top:644.82px;font-size:13px;line-height:13px;color:#444;font-weight:400;">4</div>
<div class="t" style="right:569.25px;top:644.94px;font-size:13.8px;line-height:13.8px;color:#333;font-weight:400;letter-spacing:-0.35px">4.7K</div>
<div class="b" style="left:468px;top:641.72px;width:22px;height:19.5px;background:#8dd1a9;border-radius:3px"></div>
<div class="t" style="left:429.00px;width:100px;text-align:center;top:644.82px;font-size:13px;line-height:13px;color:#333;font-weight:400;">3</div>
<div class="t" style="right:493.15px;top:644.94px;font-size:13.8px;line-height:13.8px;color:#333;font-weight:400;letter-spacing:-0.35px">0.<span style="letter-spacing:-1.3px">1</span>4</div>
<div class="b" style="left:546.2px;top:640.9200000000001px;width:60.6px;height:20.6px;background:#fff;border:1px solid #d9dbe0;border-radius:3px"></div>
<div class="t" style="left:553.90px;top:644.73px;font-size:13.1px;line-height:13.1px;color:#333;font-weight:400;letter-spacing:-1.1px">SERP</div>
<div class="chev" style="left:592.5px;top:648.52px"></div>
<div class="b" style="left:656.2px;top:651px;width:13px;height:1px;background:#c2c2c2"></div>
<div class="t" style="right:241.75px;top:644.94px;font-size:13.8px;line-height:13.8px;color:#2a60b3;font-weight:400;letter-spacing:-0.35px">3</div>
<svg class="tri" style="left:785px;top:649.72px" width="8" height="5" viewBox="0 0 8 5"><path d="M0 0H7.8L3.9 5Z" fill="#1b50a6"/></svg>
<div class="t" style="right:168.15px;top:644.94px;font-size:13.8px;line-height:13.8px;color:#333;font-weight:400;letter-spacing:-0.35px">75</div>
<div class="t" style="right:117.95px;top:644.94px;font-size:13.8px;line-height:13.8px;color:#2a60b3;font-weight:400;letter-spacing:-0.35px">44</div>
<svg class="tri" style="left:909.2px;top:649.72px" width="8" height="5" viewBox="0 0 8 5"><path d="M0 0H7.8L3.9 5Z" fill="#1b50a6"/></svg>
<div class="t" style="right:44.25px;top:644.94px;font-size:13.8px;line-height:13.8px;color:#aaa;font-weight:400;letter-spacing:-0.35px">0</div>
<div class="t" style="left:994.20px;top:644.94px;font-size:13.8px;line-height:13.8px;color:#333;font-weight:400;letter-spacing:-0.35px"><span style="letter-spacing:-1.3px">1</span> d a</div>
<div class="b" style="left:738px;top:667.8px;width:62px;height:32px;background:#e3effc"></div>
<div class="b" style="left:187.5px;top:698.8px;width:832.5px;height:1px;background:#efefef"></div>
<div class="b" style="left:187px;top:677.0px;width:14px;height:13.5px;border:1px solid #dcdcdc;border-radius:3.5px;background:#fff"></div>
<svg class="b" style="left:210px;top:677.5999999999999px" width="12" height="12" viewBox="0 0 12 12"><path d="M0.6 6H11.4M6 0.6V11.4" stroke="#9d9d9d" stroke-width="1.4"/></svg>
<div class="t" style="left:231.80px;top:677.27px;font-size:13.5px;line-height:13.5px;color:#2a60b3;font-weight:400;letter-spacing:-0.1px">когтеточка для кота</div>
<div class="b" style="left:375.7px;top:673.4px;width:20.3px;height:20.3px;background:#e8e9eb;border-radius:50%"></div>
<div class="t" style="left:335.85px;width:100px;text-align:center;top:676.90px;font-size:13px;line-height:13px;color:#444;font-weight:400;">6</div>
<div class="t" style="right:569.25px;top:677.02px;font-size:13.8px;line-height:13.8px;color:#333;font-weight:400;letter-spacing:-0.35px">4.6K</div>
<div class="b" style="left:468px;top:673.8px;width:22px;height:19.5px;background:#8dd1a9;border-radius:3px"></div>
<div class="t" style="left:429.00px;width:100px;text-align:center;top:676.90px;font-size:13px;line-height:13px;color:#333;font-weight:400;">0</div>
<div class="t" style="right:493.15px;top:677.02px;font-size:13.8px;line-height:13.8px;color:#333;font-weight:400;letter-spacing:-0.35px">0.<span style="letter-spacing:-1.3px">1</span>2</div>
<div class="b" style="left:546.2px;top:673.0px;width:60.6px;height:20.6px;background:#fff;border:1px solid #d9dbe0;border-radius:3px"></div>
<div class="t" style="left:553.90px;top:676.81px;font-size:13.1px;line-height:13.1px;color:#333;font-weight:400;letter-spacing:-1.1px">SERP</div>
<div class="chev" style="left:592.5px;top:680.5999999999999px"></div>
<div class="b" style="left:656.2px;top:683px;width:13px;height:1px;background:#c2c2c2"></div>
<div class="t" style="right:241.75px;top:677.02px;font-size:13.8px;line-height:13.8px;color:#2a60b3;font-weight:400;letter-spacing:-0.35px">7</div>
<svg class="tri" style="left:785px;top:681.8px" width="8" height="5" viewBox="0 0 8 5"><path d="M0 0H7.8L3.9 5Z" fill="#1b50a6"/></svg>
<div class="t" style="right:167.05px;top:677.02px;font-size:13.8px;line-height:13.8px;color:#333;font-weight:400;letter-spacing:-0.35px">231</div>
<div class="t" style="right:117.95px;top:677.02px;font-size:13.8px;line-height:13.8px;color:#2a60b3;font-weight:400;letter-spacing:-0.35px">69</div>
<svg class="tri" style="left:909.2px;top:681.8px" width="8" height="5" viewBox="0 0 8 5"><path d="M0 0H7.8L3.9 5Z" fill="#1b50a6"/></svg>
<div class="t" style="right:44.25px;top:677.02px;font-size:13.8px;line-height:13.8px;color:#aaa;font-weight:400;letter-spacing:-0.35px">0</div>
<div class="t" style="left:994.20px;top:677.02px;font-size:13.8px;line-height:13.8px;color:#333;font-weight:400;letter-spacing:-0.35px"><span style="letter-spacing:-1.3px">1</span> d a</div>
<div class="b" style="left:862px;top:699.88px;width:62px;height:32px;background:#e3effc"></div>
<div class="b" style="left:187.5px;top:730.88px;width:832.5px;height:1px;background:#efefef"></div>
<div class="b" style="left:187px;top:709.08px;width:14px;height:13.5px;border:1px solid #dcdcdc;border-radius:3.5px;background:#fff"></div>
<svg class="b" style="left:210px;top:709.68px" width="12" height="12" viewBox="0 0 12 12"><path d="M0.6 6H11.4M6 0.6V11.4" stroke="#9d9d9d" stroke-width="1.4"/></svg>
<div class="t" style="left:231.80px;top:709.35px;font-size:13.5px;line-height:13.5px;color:#2a60b3;font-weight:400;letter-spacing:-0.1px">пеніцилін</div>
<div class="b" style="left:375.7px;top:705.48px;width:20.3px;height:20.3px;background:#e8e9eb;border-radius:50%"></div>
<div class="t" style="left:335.85px;width:100px;text-align:center;top:708.98px;font-size:13px;line-height:13px;color:#444;font-weight:400;">4</div>
<div class="t" style="right:569.25px;top:709.10px;font-size:13.8px;line-height:13.8px;color:#333;font-weight:400;letter-spacing:-0.35px">4.3K</div>
<div class="b" style="left:468px;top:705.88px;width:22px;height:19.5px;background:#8dd1a9;border-radius:3px"></div>
<div class="t" style="left:429.00px;width:100px;text-align:center;top:708.98px;font-size:13px;line-height:13px;color:#333;font-weight:400;">0</div>
<div class="t" style="right:493.15px;top:709.10px;font-size:13.8px;line-height:13.8px;color:#333;font-weight:400;letter-spacing:-0.35px">0.02</div>
<div class="b" style="left:546.2px;top:705.08px;width:60.6px;height:20.6px;background:#fff;border:1px solid #d9dbe0;border-radius:3px"></div>
<div class="t" style="left:553.90px;top:708.89px;font-size:13.1px;line-height:13.1px;color:#333;font-weight:400;letter-spacing:-1.1px">SERP</div>
<div class="chev" style="left:592.5px;top:712.68px"></div>
<div class="b" style="left:656.2px;top:715px;width:13px;height:1px;background:#c2c2c2"></div>
<div class="b" style="left:780px;top:715px;width:13px;height:1px;background:#c2c2c2"></div>
<div class="t" style="right:117.95px;top:709.10px;font-size:13.8px;line-height:13.8px;color:#2a60b3;font-weight:400;letter-spacing:-0.35px">8</div>
<svg class="tri" style="left:909.2px;top:713.88px" width="8" height="5" viewBox="0 0 8 5"><path d="M0 0H7.8L3.9 5Z" fill="#1b50a6"/></svg>
<div class="t" style="right:43.15px;top:709.10px;font-size:13.8px;line-height:13.8px;color:#333;font-weight:400;letter-spacing:-0.35px">1</div>
<div class="t" style="left:994.20px;top:709.10px;font-size:13.8px;line-height:13.8px;color:#333;font-weight:400;letter-spacing:-0.35px"><span style="letter-spacing:-1.3px">1</span>0 h</div>
<div class="b" style="left:738px;top:731.96px;width:62px;height:32px;background:#e3effc"></div>
<div class="b" style="left:187.5px;top:762.96px;width:832.5px;height:1px;background:#efefef"></div>
<div class="b" style="left:367px;top:292px;width:1px;height:441px;background:#eeeeee"></div>
<div class="b" style="left:614px;top:292px;width:1px;height:441px;background:#eeeeee"></div>
<div class="b" style="left:738px;top:292px;width:1px;height:441px;background:#eeeeee"></div>
<div class="b" style="left:862px;top:292px;width:1px;height:441px;background:#eeeeee"></div>
<div class="b" style="left:987px;top:292px;width:1px;height:441px;background:#eeeeee"></div>
<div class="b" style="left:1020.3px;top:208.7px;width:3.7px;height:525px;background:#eaebed"></div>
</body></html>
